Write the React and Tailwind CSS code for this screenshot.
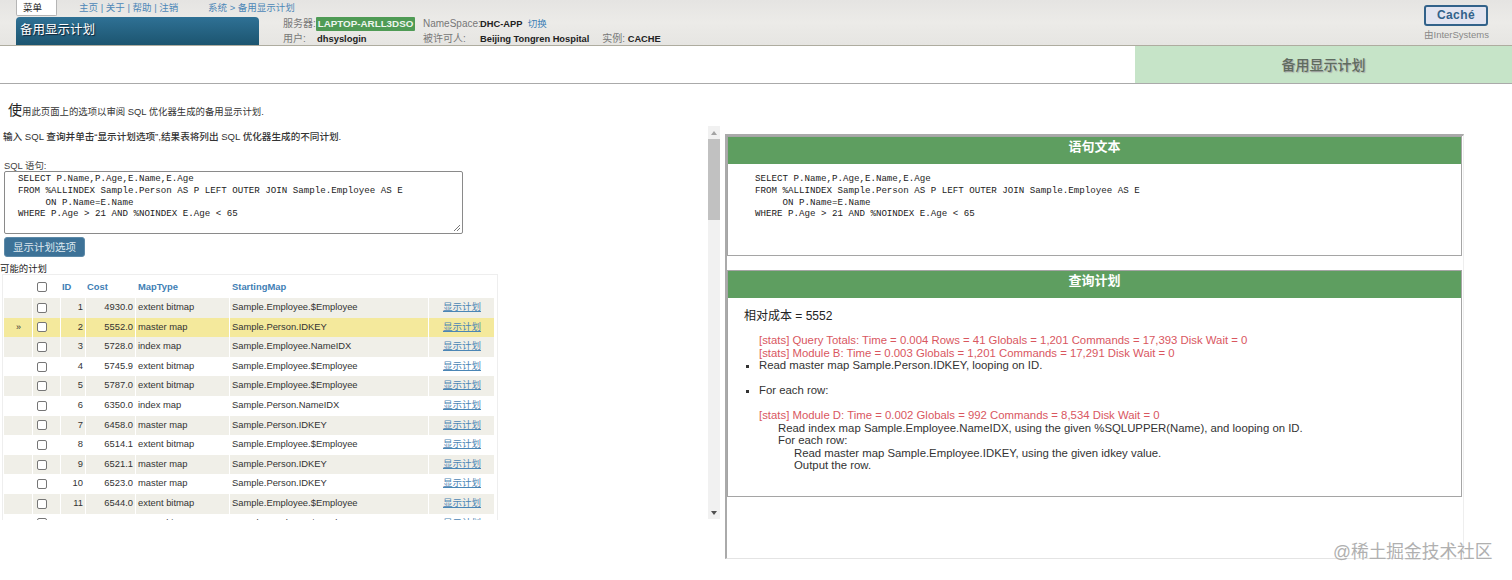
import React from 'react';

const plans = [
    [1, '4930.0', 'extent bitmap', 'Sample.Employee.$Employee'],
    [2, '5552.0', 'master map', 'Sample.Person.IDKEY'],
    [3, '5728.0', 'index map', 'Sample.Employee.NameIDX'],
    [4, '5745.9', 'extent bitmap', 'Sample.Employee.$Employee'],
    [5, '5787.0', 'extent bitmap', 'Sample.Employee.$Employee'],
    [6, '6350.0', 'index map', 'Sample.Person.NameIDX'],
    [7, '6458.0', 'master map', 'Sample.Person.IDKEY'],
    [8, '6514.1', 'extent bitmap', 'Sample.Employee.$Employee'],
    [9, '6521.1', 'master map', 'Sample.Person.IDKEY'],
    [10, '6523.0', 'master map', 'Sample.Person.IDKEY'],
    [11, '6544.0', 'extent bitmap', 'Sample.Employee.$Employee'],
    [12, '6608.0', 'extent bitmap', 'Sample.Employee.$Employee'],
];

const rowCols = 'grid grid-cols-[28px_27px_24px_49px_93px_198px_65px] gap-x-px';

const Check = () => <span className="block w-[10px] h-[10px] rounded-[2px] border border-[#767676] bg-white" />;

const Sql = ({ className }) => (
    <pre className={`font-['Liberation_Mono',monospace] text-[9.17px] leading-[11.8px] text-[#222] ${className}`}>
        {`SELECT P.Name,P.Age,E.Name,E.Age
FROM %ALLINDEX Sample.Person AS P LEFT OUTER JOIN Sample.Employee AS E
     ON P.Name=E.Name
WHERE P.Age > 21 AND %NOINDEX E.Age < 65`}
    </pre>
);

const Header = () => (
    <div className="relative h-[46px] bg-gradient-to-b from-[#e5e4e2] via-[#ecebe8] to-[#e6e5e2] border-b border-[#aeac9f] flex">
        <div className="w-[283px] shrink-0 pl-[16px] flex flex-col">
            <div className="flex w-max h-[17px] text-[9.5px] leading-[16px]">
                <div className="w-[41px] h-[16px] bg-white border border-t-0 border-[#b5b5b5] rounded-b-[2px] pl-[6px] text-[#222]">菜单</div>
                <div className="ml-[22px] w-[129px] text-[#4d87b7] whitespace-nowrap">主页 | 关于 | 帮助 | 注销</div>
                <div className="text-[#4d87b7] whitespace-nowrap">系统 &gt; 备用显示计划</div>
            </div>
            <div className="w-[243px] h-[28px] rounded-t-[4px] bg-gradient-to-b from-[#2f7195] to-[#1c5570] pl-[4px] pt-[5px] text-[12.5px] leading-[16px] text-white [text-shadow:1px_1px_1px_#123]">
                备用显示计划
            </div>
        </div>
        <div className="pt-[17px] text-[10px] text-[#777]">
            <div className="grid grid-cols-[33px_107px_57px_auto] h-[14px] leading-[14px] items-center">
                <span>服务器:</span>
                <span className="w-[99px] h-[14px] bg-[#4f9b55] rounded-[1px] text-center font-bold text-[9.8px] text-[#eef5ee] whitespace-nowrap">LAPTOP-ARLL3DSO</span>
                <span>NameSpace:</span>
                <span className="font-bold text-[9.3px] text-[#222] whitespace-nowrap">DHC-APP <span className="ml-[3px] font-normal text-[9.5px] text-[#3d7fb5]">切换</span></span>
            </div>
            <div className="grid grid-cols-[33px_107px_57px_auto] mt-[1px] h-[14px] leading-[14px] items-center">
                <span>用户:</span>
                <span className="pl-px font-bold text-[9.4px] text-[#222]">dhsyslogin</span>
                <span>被许可人:</span>
                <span className="font-bold text-[9.3px] text-[#222] whitespace-nowrap">
                    Beijing Tongren Hospital
                    <span className="ml-[13px] font-normal text-[10px] text-[#777]">实例:</span> CACHE
                </span>
            </div>
        </div>
        <div className="ml-auto mr-[24px] w-[64px] pt-[5px]">
            <div className="h-[21px] rounded-[3px] border-2 border-[#32628a] bg-[#e2e4f0] text-center text-[12px] leading-[17px] font-bold text-[#32628a] tracking-[0.4px]">
                Caché
            </div>
            <div className="mt-[3px] text-[9.5px] leading-[12px] text-[#888] whitespace-nowrap">由InterSystems</div>
        </div>
    </div>
);

const PageTitle = () => (
    <div className="h-[38px] bg-white border-b border-[#aaa] flex justify-end">
        <div className="w-[377px] bg-[#c6e4c8] text-center text-[14px] leading-[39px] font-medium text-[#5f6b5f] [text-shadow:1px_1px_1px_#aaa]">
            备用显示计划
        </div>
    </div>
);

const PlanTable = () => (
    <div className="ml-[2px] -mt-[2px] w-[496px] h-[246px] overflow-hidden border-t border-x border-[#eeeeee] pl-[1px] pt-[1px] text-[9.4px] text-[#333]">
        <div className={`${rowCols} h-[22px] items-center font-bold text-[#3f80b5] leading-none`}>
            <span />
            <span className="pl-[4px]"><Check /></span>
            <span className="pl-[1px]">ID</span>
            <span className="pl-[1px]">Cost</span>
            <span className="pl-[2px]">MapType</span>
            <span className="pl-[2px]">StartingMap</span>
            <span />
        </div>
        {plans.map(([id, cost, type, map], i) => {
            const bg = id === 2 ? 'bg-[#f4e99c]' : i % 2 === 0 ? 'bg-[#f0efe8]' : 'bg-white';
            return (
                <div key={id} className={`${rowCols} h-[19.6px] items-stretch leading-[18px]`}>
                    <span className={`${bg} pl-[12px] text-[9px]`}>{id === 2 ? '»' : ''}</span>
                    <span className={`${bg} pl-[4px] flex items-center`}><Check /></span>
                    <span className={`${bg} pr-[2px] text-right`}>{id}</span>
                    <span className={`${bg} pr-[2px] text-right`}>{cost}</span>
                    <span className={`${bg} pl-[2px]`}>{type}</span>
                    <span className={`${bg} pl-[2px]`}>{map}</span>
                    <span className={`${bg} pl-[14px] text-[9.5px] text-[#4b86b5] underline`}>显示计划</span>
                </div>
            );
        })}
    </div>
);

const LeftColumn = () => (
    <div className="w-[708px] shrink-0">
        <p className="pl-[8px] mt-[17px] h-[18px] leading-[18px] text-[9.4px] text-[#333]">
            <span className="text-[14px] text-[#222]">使</span>用此页面上的选项以审阅 SQL 优化器生成的备用显示计划.
        </p>
        <p className="pl-[3px] mt-[11px] h-[14px] leading-[14px] text-[9.6px] font-medium text-[#333]">
            输入 SQL 查询并单击“显示计划选项”,结果表将列出 SQL 优化器生成的不同计划.
        </p>
        <p className="pl-[4px] mt-[17px] h-[10px] leading-[10px] text-[9.4px] text-[#444]">SQL 语句:</p>
        <div className="relative ml-[4px] w-[459px] h-[63px] border border-[#8a8a8a] rounded-[2px] bg-white pl-[13px] pt-[1px]">
            <Sql />
            <svg className="absolute right-[1px] bottom-[1px]" width="8" height="8" viewBox="0 0 8 8">
                <path d="M1 7 7 1M4 7 7 4" stroke="#777" strokeWidth="1" />
            </svg>
        </div>
        <button className="block ml-[4px] mt-[3px] w-[81px] h-[20px] rounded-[3px] bg-[#3d7297] border border-[#5d8aa8] text-[10.5px] leading-[18px] text-[#dfe9f0]">
            显示计划选项
        </button>
        <p className="mt-[5px] h-[14px] leading-[14px] text-[9.4px] text-[#222]">可能的计划</p>
        <PlanTable />
    </div>
);

const ScrollBar = () => (
    <div className="w-[12px] h-[393px] mt-[42px] shrink-0 bg-[#f1f1f1] flex flex-col items-center justify-between">
        <div className="w-full">
            <div className="h-[13px] flex items-center justify-center">
                <svg width="6" height="4" viewBox="0 0 6 4"><path d="M3 0 6 4H0z" fill="#a3a3a3" /></svg>
            </div>
            <div className="h-[81px] bg-[#c1c1c1]" />
        </div>
        <div className="h-[13px] flex items-center justify-center">
            <svg width="6" height="4" viewBox="0 0 6 4"><path d="M0 0H6L3 4z" fill="#505050" /></svg>
        </div>
    </div>
);

const Panel = ({ title, className, children }) => (
    <div className={`border border-[#a5a5a5] border-t-0 bg-white ${className}`}>
        <div className="h-[28px] bg-[#5e9e60] border-t border-[#a5a5a5] text-center text-[13px] leading-[20px] font-bold text-white">
            {title}
        </div>
        {children}
    </div>
);

const Stat = ({ children }) => <div className="text-[#d9575f]">{children}</div>;

const RightColumn = () => (
    <div className="ml-[5px] mt-[50px] w-[739px] h-[425px] shrink-0 border-l-2 border-t-2 border-[#aaaaaa] border-r border-r-[#eeeeee] border-b border-b-[#e4e4e4]">
        <Panel title="语句文本" className="mr-[1px] h-[120px]">
            <Sql className="pl-[27px] pt-[9px]" />
        </Panel>
        <Panel title="查询计划" className="mr-[1px] mt-[14px] h-[227px]">
            <div className="pl-[16px] pt-[10px] text-[12px] text-[#222] leading-[16px]">相对成本 = 5552</div>
            <div className="pl-[31px] pt-[10px] text-[11.36px] leading-[12.55px] text-[#333]">
                <Stat>[stats] Query Totals: Time = 0.004 Rows = 41 Globals = 1,201 Commands = 17,393 Disk Wait = 0</Stat>
                <Stat>[stats] Module B: Time = 0.003 Globals = 1,201 Commands = 17,291 Disk Wait = 0</Stat>
                <ul className="list-[square] -ml-[1px] pl-[1px]">
                    <li>Read master map Sample.Person.IDKEY, looping on ID.</li>
                    <li className="mt-[12.55px]">For each row:</li>
                </ul>
                <div className="mt-[12.55px]"><Stat>[stats] Module D: Time = 0.002 Globals = 992 Commands = 8,534 Disk Wait = 0</Stat></div>
                <div className="pl-[19px]">Read index map Sample.Employee.NameIDX, using the given %SQLUPPER(Name), and looping on ID.</div>
                <div className="pl-[19px]">For each row:</div>
                <div className="pl-[35px]">Read master map Sample.Employee.IDKEY, using the given idkey value.</div>
                <div className="pl-[35px]">Output the row.</div>
            </div>
        </Panel>
    </div>
);

export default function App() {
    return (
        <div className="relative w-[1512px] h-[580px] overflow-hidden bg-white font-['Liberation_Sans','Noto_Sans_CJK_SC',sans-serif]">
            <Header />
            <PageTitle />
            <div className="flex">
                <LeftColumn />
                <ScrollBar />
                <RightColumn />
            </div>
            <div className="absolute left-[1333px] top-[541px] text-[17.7px] leading-[22px] text-[#b0b0b0] whitespace-nowrap">
                @稀土掘金技术社区
            </div>
        </div>
    );
}
